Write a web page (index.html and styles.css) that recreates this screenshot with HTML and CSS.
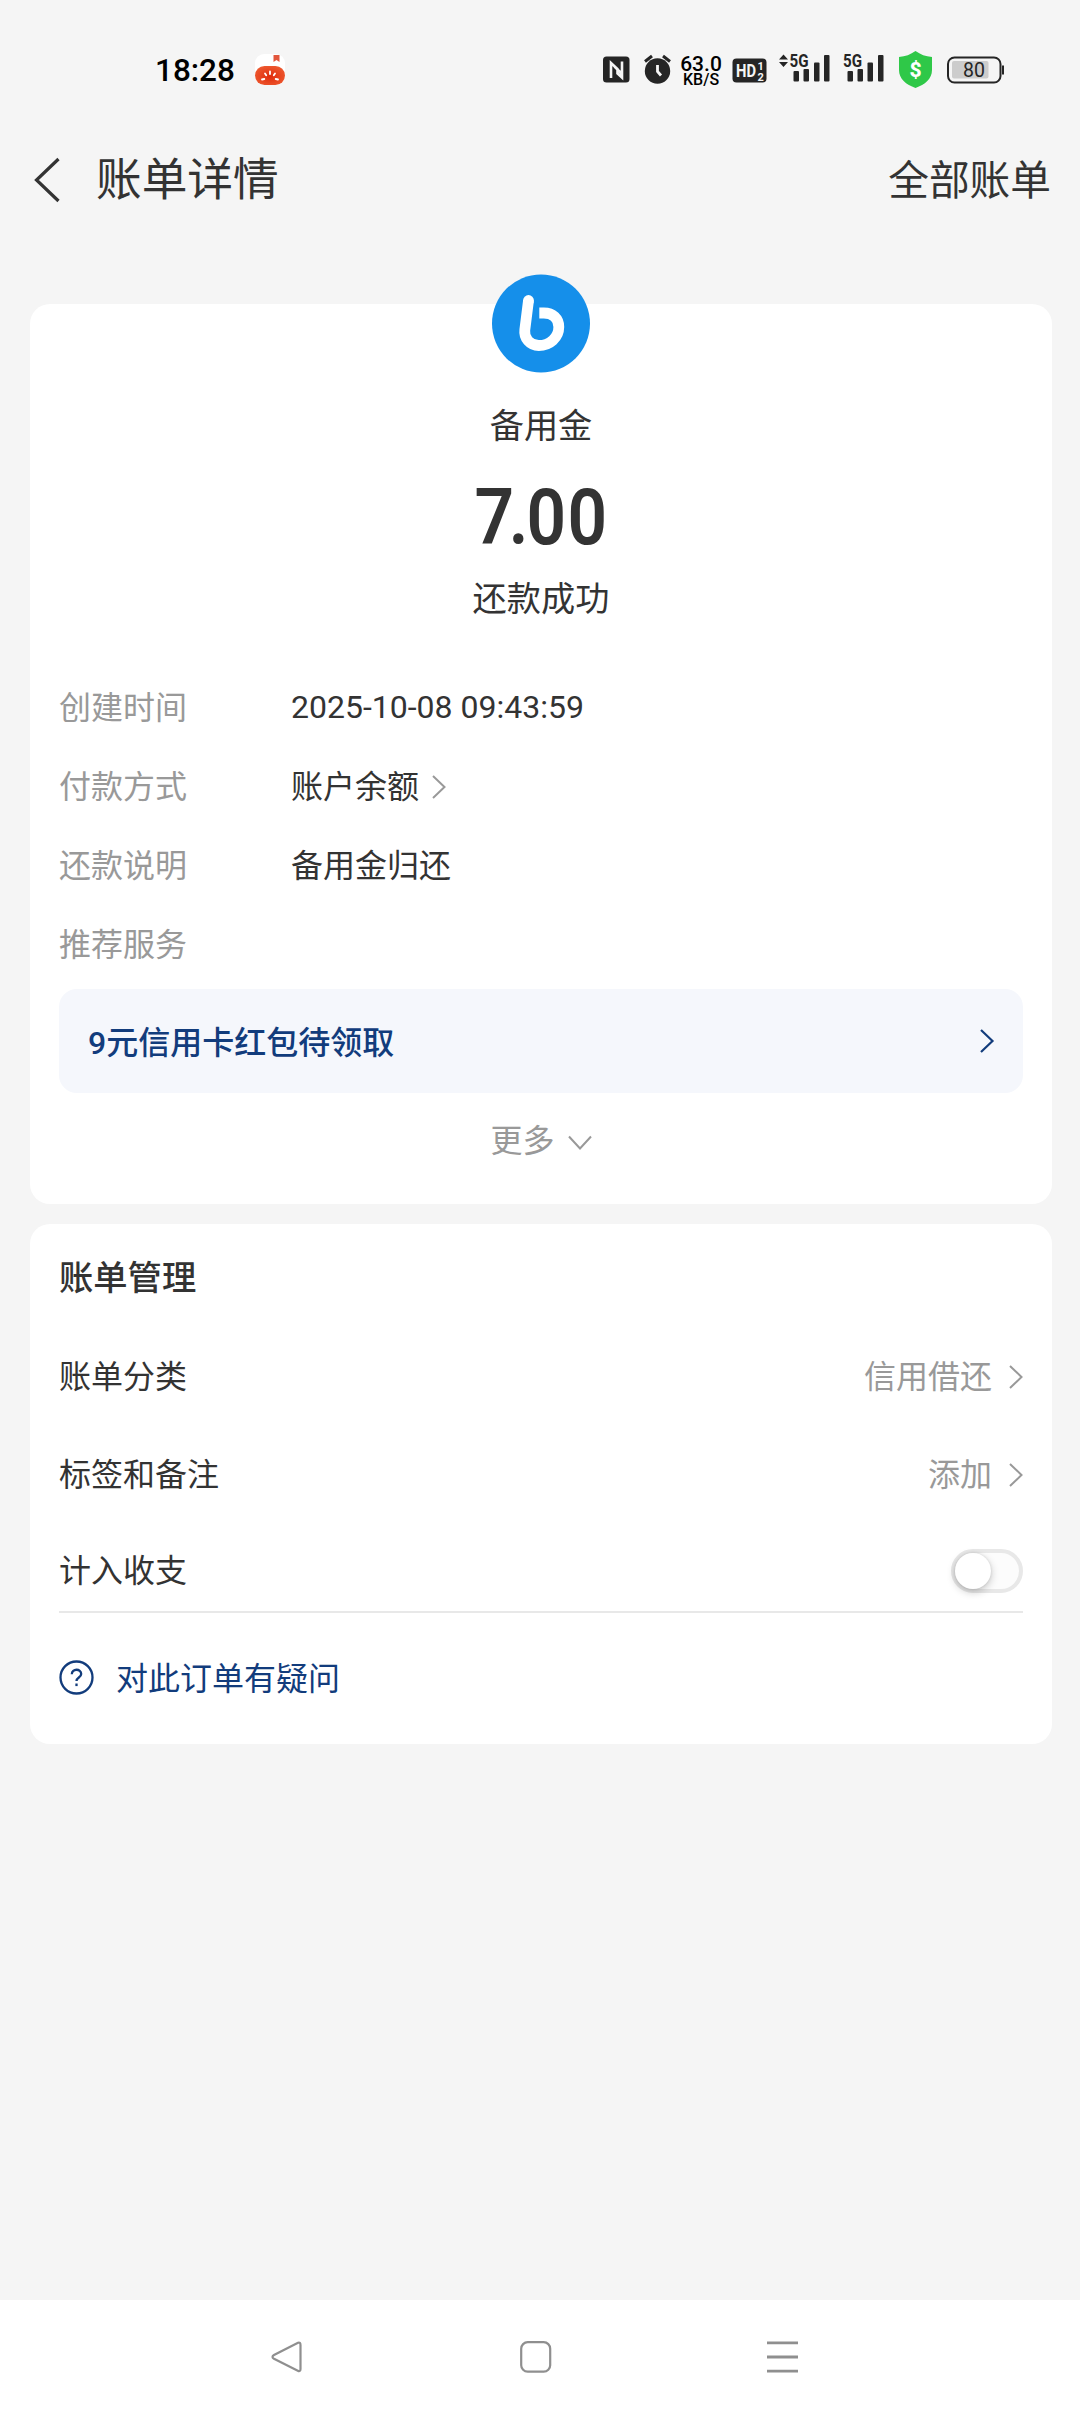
FILE: index.html
```html
<!DOCTYPE html>
<html lang="zh-CN">
<head>
<meta charset="utf-8">
<title>账单详情</title>
<link rel="stylesheet" href="styles.css">
</head>
<body>
<div class="screen">
  <div class="status">
    <span class="clock">18:28</span>
    <svg class="tomato" width="30" height="32" viewBox="0 0 30 32">
      <defs><radialGradient id="tom" cx=".5" cy=".55" r=".6"><stop offset="0" stop-color="#e02c0c"/><stop offset="1" stop-color="#ee5a30"/></radialGradient></defs>
      <rect width="30" height="31" rx="9" fill="#fff"/>
      <path d="M18.500 1h6v7l-3-2-3 2z" fill="#e2563c"/>
      <rect y="12" width="30" height="19" rx="9.500" fill="url(#tom)"/>
      <path d="M15 17.500v2.500M10 19.500l1.200 1.800M20 19.500l-1.200 1.800M7 25.500l2.300-.5M23 25.500l-2.300-.5" stroke="#fff" stroke-width="1.800" stroke-linecap="round"/>
    </svg>
    <div class="tray">
      <svg width="27" height="40" viewBox="603 50 27 40">
        <rect x="603" y="56.500" width="26.500" height="26" rx="3.500" fill="#252525"/>
        <path d="M611 78V63l6.500 6v4.500l4.500 4V61.500M614.500 66.500l7 7" fill="none" stroke="#f5f5f5" stroke-width="2.600"/>
      </svg>
      <svg class="gap-alarm" width="28" height="40" viewBox="644 50 28 40">
        <circle cx="657.500" cy="71" r="12.700" fill="#252525"/>
        <path d="M645 61.500l7-5.500M670 61.500l-7-5.500" stroke="#252525" stroke-width="3"/>
        <path d="M657.500 65v6.500l3.500 4" fill="none" stroke="#f5f5f5" stroke-width="2.800"/>
      </svg>
      <div class="speed"><span>63.0</span><span class="unit">KB/S</span></div>
      <svg class="gap-hd" width="35" height="40" viewBox="732 50 35 40">
        <rect x="732.500" y="58.500" width="34" height="24" rx="4" fill="#252525"/>
        <g fill="#f5f5f5" font-weight="700"><text x="736" y="77" font-size="19" textLength="20" lengthAdjust="spacingAndGlyphs">HD</text><text x="757.500" y="70" font-size="11">1</text><text x="757.500" y="80.500" font-size="11">2</text></g>
      </svg>
      <svg class="gap-sig" width="52" height="40" viewBox="778 50 52 40" fill="#252525">
        <path d="M783.500 54.500l4.500 5h-9zM783.500 67l4.500-5h-9z"/>
        <text x="789.500" y="67" font-size="18" font-weight="700" textLength="19" lengthAdjust="spacingAndGlyphs">5G</text>
        <rect x="793.500" y="71" width="5.500" height="10.500" rx="1"/><rect x="803.500" y="69" width="5.500" height="12.500" rx="1"/><rect x="814" y="62.500" width="5.500" height="19" rx="1"/><rect x="824" y="55" width="5.500" height="26.500" rx="1"/>
      </svg>
      <svg class="gap-sig2" width="42" height="40" viewBox="842 50 42 40" fill="#252525">
        <text x="843" y="67" font-size="18" font-weight="700" textLength="19" lengthAdjust="spacingAndGlyphs">5G</text>
        <rect x="847.500" y="71" width="5.500" height="10.500" rx="1"/><rect x="857.500" y="69" width="5.500" height="12.500" rx="1"/><rect x="867.500" y="62.500" width="5.500" height="19" rx="1"/><rect x="878" y="55" width="5.500" height="26.500" rx="1"/>
      </svg>
      <svg class="gap-shield" width="34" height="40" viewBox="899 50 34 40">
        <path d="M915.500 51c5 3.500 10 5.500 16.500 6v13c0 9-7 14.500-16.500 18-9.500-3.500-16.500-9-16.500-18V57c6.500-.5 11.500-2.500 16.500-6z" fill="#2fc848"/>
        <text x="915.500" y="77" font-size="21" font-weight="800" fill="#fff" text-anchor="middle">$</text>
      </svg>
      <svg class="gap-bat" width="58" height="40" viewBox="947 50 58 40">
        <rect x="948" y="57.500" width="52.500" height="25" rx="6.500" fill="none" stroke="#252525" stroke-width="2"/>
        <rect x="952" y="61" width="36.500" height="17.500" rx="2" fill="#ccc"/>
        <rect x="1002" y="65.500" width="2" height="9" fill="#252525"/>
        <text x="974" y="77" font-size="19.500" fill="#252525" text-anchor="middle">80</text>
      </svg>
    </div>
  </div>

  <div class="header">
    <svg width="27" height="46" viewBox="0 0 27 46"><path d="M24.500 2L2.500 23l22 21" fill="none" stroke="#333" stroke-width="3.200"/></svg>
    <span class="title">账单详情</span>
    <span class="all">全部账单</span>
  </div>

  <div class="card summary">
    <svg class="logo" width="98" height="99" viewBox="0.500 0 98 99">
      <circle cx="49.500" cy="49.500" r="49" fill="#158fea"/>
      <path d="M37 26.500L33.300 56c-1 8 5 15.500 14 15.500 11 0 20-8 20-18.500 0-8.500-6-14-15-14h-4.500" fill="none" stroke="#fff" stroke-width="10.800"/>
      <circle cx="37" cy="26.500" r="5.400" fill="#fff"/>
    </svg>
    <div class="payee">备用金</div>
    <div class="amount"><span><span class="int">7</span><span class="dot">.</span>00</span></div>
    <div class="state">还款成功</div>
    <div class="facts">
      <div class="fact"><span class="label">创建时间</span><span class="date">2025-10-08 09:43:59</span></div>
      <div class="fact"><span class="label">付款方式</span><span>账户余额</span><svg class="chev" width="16" height="24" viewBox="0 0 16 24"><path d="M2 1l11.500 11L2 23"/></svg></div>
      <div class="fact"><span class="label">还款说明</span><span>备用金归还</span></div>
      <div class="fact"><span class="label">推荐服务</span></div>
    </div>
    <div class="promo"><span>9元信用卡红包待领取</span><svg class="chev" width="16" height="24" viewBox="0 0 16 24"><path d="M2 1l11.500 11L2 23"/></svg></div>
    <div class="more"><span>更多</span><svg class="chev" width="24" height="16" viewBox="0 0 24 16"><path d="M1 1.500l11 12 11-12"/></svg></div>
  </div>

  <div class="card manage">
    <div class="heading">账单管理</div>
    <div class="row"><span>账单分类</span><span class="value">信用借还</span><svg class="chev" width="16" height="24" viewBox="0 0 16 24"><path d="M2 1l11.500 11L2 23"/></svg></div>
    <div class="row"><span>标签和备注</span><span class="value">添加</span><svg class="chev" width="16" height="24" viewBox="0 0 16 24"><path d="M2 1l11.500 11L2 23"/></svg></div>
    <div class="row last"><span>计入收支</span><span class="toggle"><span class="thumb"></span></span></div>
    <div class="help">
      <svg width="35" height="35" viewBox="0 0 35 35" fill="none" stroke="#123c7c" stroke-width="2.300"><circle cx="17.500" cy="17.500" r="16"/><path d="M12.800 14.300c0-6 9.400-6 9.400-.3 0 3.500-4.700 3.500-4.700 7"/><path d="M17.500 23.500v2.600"/></svg>
      <span>对此订单有疑问</span>
    </div>
  </div>

  <div class="nav">
    <svg width="32" height="32" viewBox="0 0 32 32"><path d="M27 1.800Q29.500 1 29.500 4v24q0 3-2.700 1.700L3 17.800Q0 15.900 3 14z"/></svg>
    <svg class="home" width="32" height="32" viewBox="0 0 32 32"><rect x="1.200" y="1.200" width="29" height="29.500" rx="6.500"/></svg>
    <svg width="32" height="32" viewBox="0 0 32 32"><path d="M0 1.800h31M0 16h31M0 30.200h31" stroke-width="2.800"/></svg>
  </div>
</div>
</body>
</html>
```
FILE: styles.css
```css
* { box-sizing: border-box; }
body {
  margin: 0;
  background: #f5f5f5;
  color: #333;
  font-family: Roboto, "Noto Sans CJK SC", sans-serif;
  font-size: 32px;
}
svg { display: block; flex: none; }
.screen { width: 1080px; height: 2412px; display: flex; flex-direction: column; }

.status { height: 140px; display: flex; align-items: center; padding: 0 75px 0 155px; }
.clock { width: 100px; font-weight: 500; font-size: 31.5px; color: #000; line-height: 40px; padding-top: 1px; }
.tray { display: flex; margin-left: auto; }
.gap-alarm { margin-left: 14px; }
.speed { width: 48px; margin-left: 5px; margin-right: 7px; display: flex; flex-direction: column; align-items: center; color: #000; font-size: 21px; line-height: 18px; padding-top: 5px; font-weight: 500; }
.speed .unit { font-size: 16px; line-height: 14px; }
.gap-sig { margin-left: 11px; }
.gap-sig2 { margin-left: 12px; }
.gap-shield { margin-left: 15px; }
.gap-bat { margin-left: 14px; }

.header { height: 80px; display: flex; align-items: center; padding: 0 29px 0 34px; }
.title { margin-left: 35px; font-size: 45.7px; line-height: 60px; padding-top: 1px; }
.all { margin-left: auto; font-size: 40.7px; line-height: 60px; padding-top: 2px; }

.card { margin: 0 28px 0 30px; background: #fff; border-radius: 20px; padding: 0 29px; display: flex; flex-direction: column; }
.summary { margin-top: 84px; height: 900px; }
.logo { align-self: center; margin-top: -30px; }
.payee, .state { text-align: center; font-size: 34.2px; line-height: 50px; }
.payee { margin-top: 28px; }
.amount { height: 80px; margin-top: 27px; text-align: center; font-weight: 600; font-size: 77px; line-height: 80px; }
.amount > span { display: inline-block; transform: scaleX(.9); letter-spacing: 1.5px; }
.int { letter-spacing: -6px; }
.dot { letter-spacing: -2px; }
.state { margin-top: 16px; }
.facts { margin-top: 44px; }
.fact { height: 79px; display: flex; align-items: center; line-height: 40px; }
.label { width: 232px; color: #999; }
.date { padding-bottom: 2px; }
.chev { fill: none; stroke: #999; stroke-width: 2; }
.fact .chev { margin-left: 12px; }
.promo { height: 104px; margin-top: 5px; border-radius: 18px; background: #f5f7fc; color: #123c7c; font-weight: 500; display: flex; align-items: center; justify-content: space-between; padding: 0 28px 0 29px; }
.promo span { padding-bottom: 3px; }
.promo .chev { stroke: #123c7c; stroke-width: 2.2; }
.more { margin-top: 25px; height: 42px; display: flex; align-items: center; justify-content: center; gap: 13px; color: #999; }
.more span { padding-bottom: 3px; }
.more .chev { margin-top: 7px; }

.manage { margin-top: 20px; height: 520px; }
.heading { margin-top: 29px; height: 50px; font-size: 34.3px; line-height: 50px; font-weight: 500; }
.row { height: 98px; display: flex; align-items: center; line-height: 40px; }
.row .chev { margin-right: -1px; }
.heading + .row { margin-top: 25px; }
.value { margin-left: auto; margin-right: 16px; color: #999; }
.last { height: 89px; padding-top: 6px; border-bottom: 2px solid #e8e8e8; }
.toggle { width: 72px; height: 44px; margin-left: auto; border: 4.500px solid #e8e8e8; border-radius: 22px; background: #fcfcfc; }
.thumb { display: block; width: 36px; height: 36px; border-radius: 50%; background: #fff; box-shadow: 0 3px 8px rgba(0,0,0,.22), 0 0 3px rgba(0,0,0,.12); }
.help { height: 128px; display: flex; align-items: center; gap: 22px; color: #123c7c; }
.help span { padding-bottom: 2px; }

.nav { height: 112px; margin-top: auto; background: #fff; display: flex; align-items: center; padding: 2px 281px 0 271px; justify-content: space-between; fill: none; stroke: #8f8f8f; stroke-width: 2.200; }
.home { margin-left: 1px; }
```
